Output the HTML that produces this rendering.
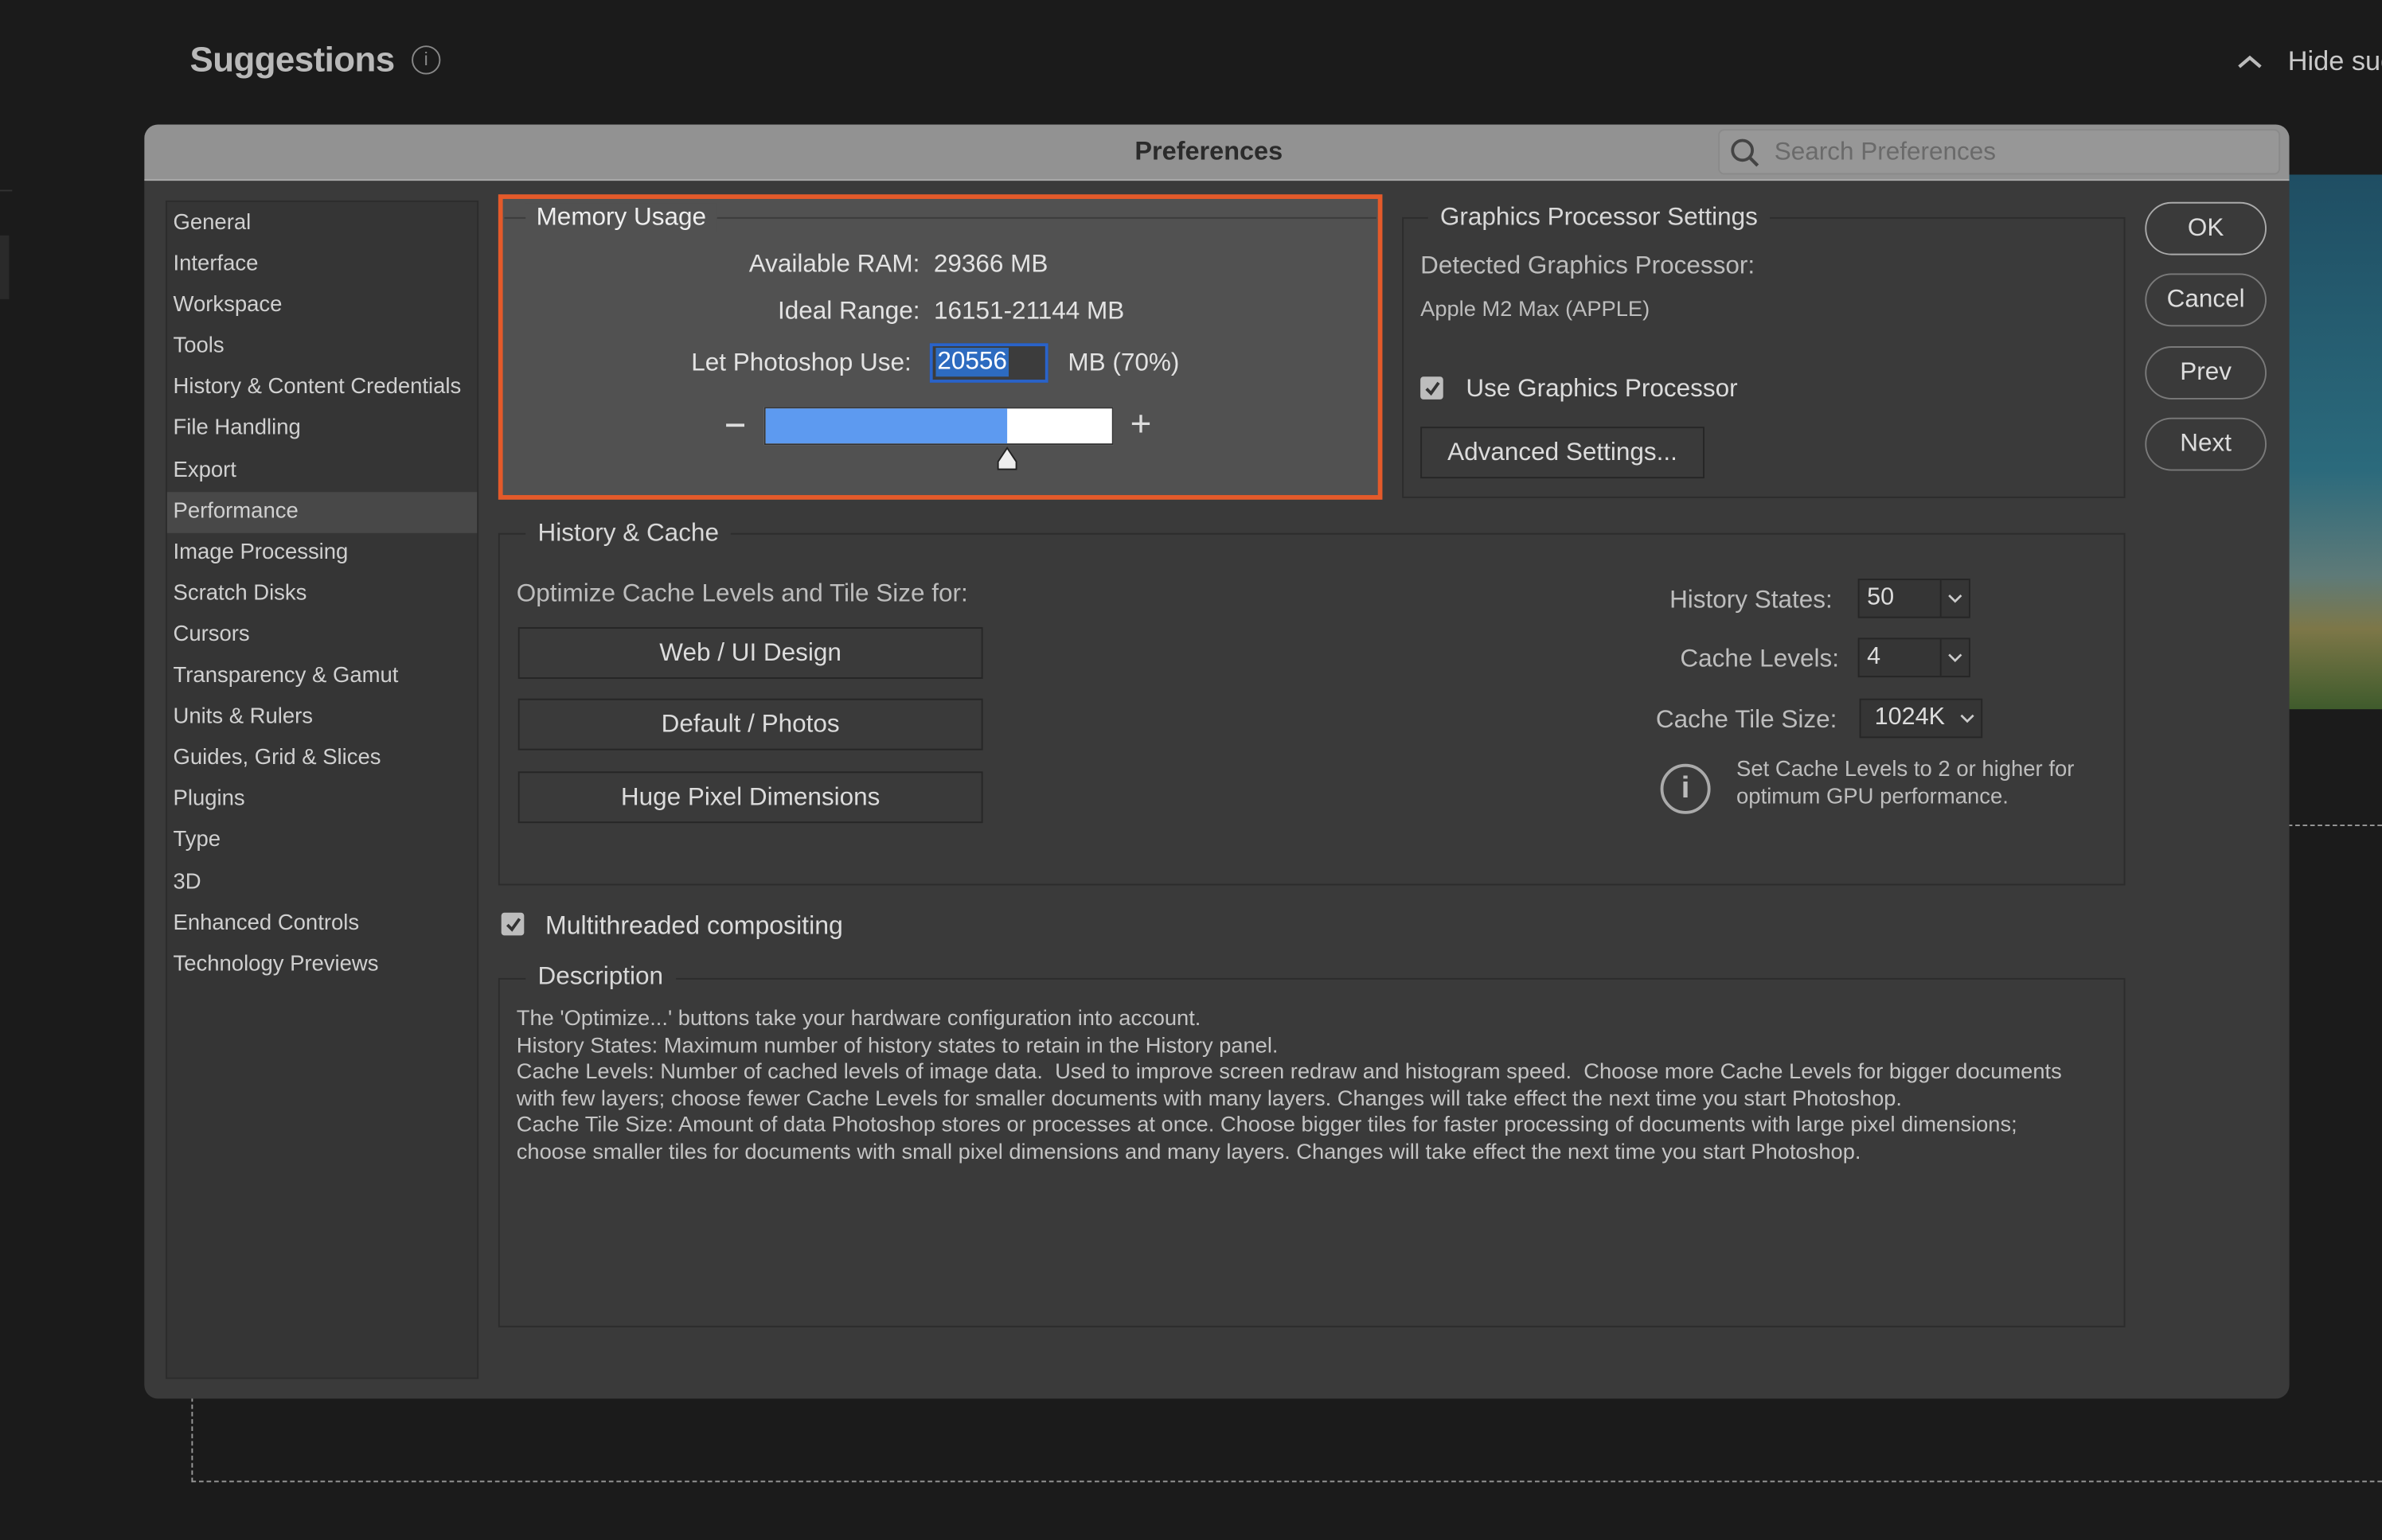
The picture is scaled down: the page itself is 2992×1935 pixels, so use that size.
<!DOCTYPE html>
<html><head><meta charset="utf-8"><style>
*{box-sizing:border-box;margin:0;padding:0}
html,body{width:2992px;height:1934px;overflow:hidden;background:#1b1b1b}
#s{position:absolute;left:0;top:0;width:1568px;height:1014px;transform:scale(1.90816);transform-origin:0 0;font-family:"Liberation Sans",sans-serif;color:#d4d4d4}
.a{position:absolute}
.t{position:absolute;white-space:nowrap;font-size:15px;color:#d8d8d8}
.side div{height:27.1px;line-height:27px;padding-left:4px;font-size:14.4px;color:#d0d0d0}
.fs{position:absolute;border:1px solid #2c2c2c}
.lg{position:absolute;background:#3a3a3a;padding:0 8px;font-size:16.5px;color:#d8d8d8}
.btn{position:absolute;border:1px solid #262626;background:#3a3a3a;color:#dcdcdc;font-size:16.5px;text-align:center}
.pill{position:absolute;left:1412px;width:80px;height:35px;border:1.5px solid #7a7a7a;border-radius:18px;text-align:center;line-height:32px;font-size:16.5px;color:#ddd}
.dd{position:absolute;height:26px;border:1px solid #262626;background:#353535;font-size:16px;color:#ddd;line-height:24px;padding-left:5px}
.cb{position:absolute;width:15px;height:15px;background:#bdbdbd;border-radius:2px}
</style></head><body><div id="s">
<div class="t" style="left:125px;top:26px;font-size:23px;font-weight:bold;color:#b9b9b9;letter-spacing:-0.3px">Suggestions</div>
<div class="a" style="left:271px;top:30px;width:19px;height:19px;border:1.5px solid #888;border-radius:50%;color:#888;font-size:12px;text-align:center;line-height:16px">i</div>
<svg class="a" style="left:1472px;top:35px" width="18" height="12"><path d="M2 9 L9 3 L16 9" stroke="#bbb" stroke-width="2.2" fill="none"/></svg>
<div class="t" style="left:1506px;top:30px;font-size:18px;color:#c9c9c9">Hide sug</div>
<div class="a" style="left:0;top:125px;width:8px;height:1px;background:#333"></div>
<div class="a" style="left:0;top:155px;width:6px;height:42px;background:#2a2a2a"></div>
<div class="a" style="left:1506px;top:115px;width:62px;height:352px;background:linear-gradient(180deg,#1f4e63 0%,#2b6a7c 55%,#5e7a78 75%,#7d7748 85%,#3f5b2c 100%)"></div>
<div class="a" style="left:1506px;top:543px;width:62px;border-top:1.5px dashed #999"></div>
<div class="a" style="left:126px;top:920px;height:56px;border-left:1.5px dashed #999"></div>
<div class="a" style="left:126px;top:975px;width:1442px;border-top:1.5px dashed #999"></div>
<div class="a" style="left:95px;top:82px;width:1412px;height:839px;background:#3a3a3a;border-radius:9px;overflow:hidden">
<div class="a" style="left:0;top:0;width:1412px;height:37px;background:#929292;border-bottom:1px solid #aaa"></div>
<div class="t" style="left:652px;top:8px;font-size:17px;font-weight:bold;color:#2b2b2b">Preferences</div>
<div class="a" style="left:1036px;top:3px;width:370px;height:30px;background:#979797;border-radius:4px;border:1px solid #8a8a8a"></div>
<svg class="a" style="left:1044px;top:9px" width="20" height="20"><circle cx="8" cy="8" r="6.5" stroke="#444" stroke-width="2" fill="none"/><path d="M13 13 L18 18" stroke="#444" stroke-width="2.2"/></svg>
<div class="t" style="left:1073px;top:9px;font-size:16.5px;color:#6a6a6a">Search Preferences</div>
</div>
<div class="a side" style="left:109px;top:132px;width:206px;height:776px;background:#353535;border:1px solid #2c2c2c;padding-top:1px">
<div>General</div><div>Interface</div><div>Workspace</div><div>Tools</div><div>History &amp; Content Credentials</div><div>File Handling</div><div>Export</div><div style="background:#484848">Performance</div><div>Image Processing</div><div>Scratch Disks</div><div>Cursors</div><div>Transparency &amp; Gamut</div><div>Units &amp; Rulers</div><div>Guides, Grid &amp; Slices</div><div>Plugins</div><div>Type</div><div>3D</div><div>Enhanced Controls</div><div>Technology Previews</div>
</div>
<div class="a" style="left:328px;top:128px;width:582px;height:201px;background:#515151;border:3px solid #e45a2a"></div>
<div class="a" style="left:332px;top:143px;width:574px;height:1px;background:#3c3c3c"></div>
<div class="t" style="left:346px;top:134px;font-size:16.5px;background:#515151;padding:0 7px;color:#eee">Memory Usage</div>
<div class="t" style="left:493px;top:165px;font-size:16.5px;color:#e3e3e3">Available RAM:&nbsp; 29366 MB</div>
<div class="t" style="left:512px;top:196px;font-size:16.5px;color:#e3e3e3">Ideal Range:&nbsp; 16151-21144 MB</div>
<div class="t" style="left:455px;top:230px;font-size:16.5px;color:#e3e3e3">Let Photoshop Use:</div>
<div class="a" style="left:612px;top:226px;width:78px;height:26px;border:2px solid #2a63c9;background:#3c3c3c"></div>
<div class="t" style="left:616px;top:229px;font-size:16.5px;background:#2d6bc0;color:#fff;padding:0 1px">20556</div>
<div class="t" style="left:703px;top:230px;font-size:16.5px;color:#e3e3e3">MB (70%)</div>
<div class="a" style="left:478px;top:279px;width:12px;height:2px;background:#ddd"></div>
<div class="a" style="left:503px;top:268px;width:230px;height:25px;background:#fff;border:1px solid #333"></div>
<div class="a" style="left:504px;top:269px;width:159px;height:23px;background:#5d9af0"></div>
<div class="t" style="left:744px;top:266px;font-size:24px;color:#ddd">+</div>
<svg class="a" style="left:655px;top:294px" width="16" height="16"><path d="M8 1 L14 10 L14 15 L2 15 L2 10 Z" fill="#eee" stroke="#222" stroke-width="1"/></svg>
<div class="fs" style="left:923px;top:143px;width:476px;height:185px"></div>
<div class="lg" style="left:940px;top:134px">Graphics Processor Settings</div>
<div class="t" style="left:935px;top:166px;font-size:16.5px;color:#bdbdbd">Detected Graphics Processor:</div>
<div class="t" style="left:935px;top:196px;font-size:14.3px;color:#bdbdbd">Apple M2 Max (APPLE)</div>
<div class="cb" style="left:935px;top:248px"></div>
<svg class="a" style="left:937px;top:250px" width="12" height="12"><path d="M2 6 L5 9 L10 2" stroke="#333" stroke-width="2" fill="none"/></svg>
<div class="t" style="left:965px;top:247px;font-size:16.5px;color:#dcdcdc">Use Graphics Processor</div>
<div class="btn" style="left:935px;top:281px;width:187px;height:34px;line-height:32px">Advanced Settings...</div>
<div class="pill" style="top:133px;border-color:#aaa">OK</div>
<div class="pill" style="top:180px">Cancel</div>
<div class="pill" style="top:228px">Prev</div>
<div class="pill" style="top:275px">Next</div>
<div class="fs" style="left:328px;top:351px;width:1071px;height:232px"></div>
<div class="lg" style="left:346px;top:342px">History &amp; Cache</div>
<div class="t" style="left:340px;top:382px;font-size:16.5px;color:#bdbdbd">Optimize Cache Levels and Tile Size for:</div>
<div class="btn" style="left:341px;top:413px;width:306px;height:34px;line-height:32px">Web / UI Design</div>
<div class="btn" style="left:341px;top:460px;width:306px;height:34px;line-height:32px">Default / Photos</div>
<div class="btn" style="left:341px;top:508px;width:306px;height:34px;line-height:32px">Huge Pixel Dimensions</div>
<div class="t" style="left:1099px;top:386px;font-size:16.5px;color:#bdbdbd">History States:</div>
<div class="dd" style="left:1223px;top:381px;width:74px">50</div>
<div class="t" style="left:1106px;top:425px;font-size:16.5px;color:#bdbdbd">Cache Levels:</div>
<div class="dd" style="left:1223px;top:420px;width:74px">4</div>
<div class="a" style="left:1277px;top:382px;width:1px;height:24px;background:#262626"></div>
<div class="a" style="left:1277px;top:421px;width:1px;height:24px;background:#262626"></div>
<svg class="a" style="left:1282px;top:390px" width="10" height="8"><path d="M1 2 L5 6 L9 2" stroke="#ccc" stroke-width="1.4" fill="none"/></svg>
<svg class="a" style="left:1282px;top:429px" width="10" height="8"><path d="M1 2 L5 6 L9 2" stroke="#ccc" stroke-width="1.4" fill="none"/></svg>
<div class="t" style="left:1090px;top:465px;font-size:16.5px;color:#bdbdbd">Cache Tile Size:</div>
<div class="dd" style="left:1224px;top:460px;width:81px;padding-left:9px">1024K</div>
<svg class="a" style="left:1290px;top:469px" width="10" height="8"><path d="M1 2 L5 6 L9 2" stroke="#ccc" stroke-width="1.4" fill="none"/></svg>
<div class="a" style="left:1093px;top:503px;width:33px;height:33px;border:2px solid #aaa;border-radius:50%;text-align:center;font-size:20px;line-height:29px;color:#bbb;font-weight:bold">i</div>
<div class="t" style="left:1143px;top:498px;font-size:14.4px;color:#bdbdbd;line-height:18px">Set Cache Levels to 2 or higher for<br>optimum GPU performance.</div>
<div class="cb" style="left:330px;top:601px"></div>
<svg class="a" style="left:332px;top:603px" width="12" height="12"><path d="M2 6 L5 9 L10 2" stroke="#333" stroke-width="2" fill="none"/></svg>
<div class="t" style="left:359px;top:600px;font-size:16.8px;color:#dcdcdc">Multithreaded compositing</div>
<div class="fs" style="left:328px;top:644px;width:1071px;height:230px"></div>
<div class="lg" style="left:346px;top:634px">Description</div>
<div class="t" style="left:340px;top:663px;font-size:14.3px;line-height:17.6px;color:#c4c4c4">The 'Optimize...' buttons take your hardware configuration into account.<br>History States: Maximum number of history states to retain in the History panel.<br>Cache Levels: Number of cached levels of image data.&nbsp; Used to improve screen redraw and histogram speed.&nbsp; Choose more Cache Levels for bigger documents<br>with few layers; choose fewer Cache Levels for smaller documents with many layers. Changes will take effect the next time you start Photoshop.<br>Cache Tile Size: Amount of data Photoshop stores or processes at once. Choose bigger tiles for faster processing of documents with large pixel dimensions;<br>choose smaller tiles for documents with small pixel dimensions and many layers. Changes will take effect the next time you start Photoshop.</div>
</div></body></html>
